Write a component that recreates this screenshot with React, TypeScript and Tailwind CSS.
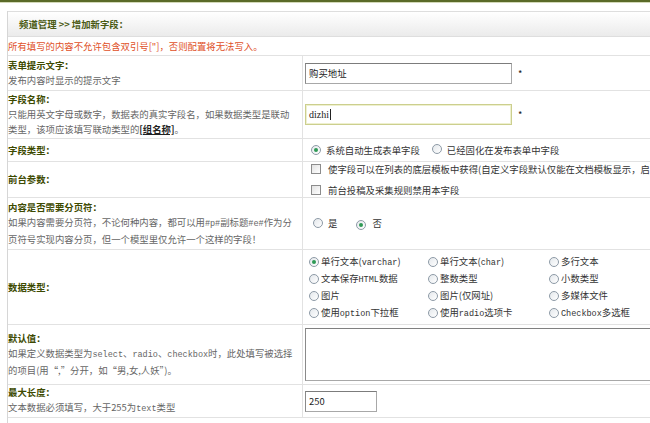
import React from 'react';

const labelCls = 'font-bold text-[#3d4a00]';
const descCls = 'text-[#666666]';

// latin words in the old SimSun pages are narrow and mono
const M: React.FC<{ children: React.ReactNode }> = ({ children }) => (
  <span className="font-['Liberation_Mono',monospace] text-[8.5px]">{children}</span>
);

const Radio: React.FC<{ checked?: boolean }> = ({ checked }) => (
  <span className="inline-flex w-[10px] h-[10px] shrink-0 items-center justify-center rounded-full border border-[#8d9aa6] bg-gradient-to-br from-[#e4e8ec] to-white">
    {checked && <span className="w-[4px] h-[4px] rounded-full bg-[#2f9a55]" />}
  </span>
);

const Checkbox: React.FC = () => (
  <span className="inline-block w-[10px] h-[10px] shrink-0 border border-[#8c8c8c] bg-gradient-to-br from-[#e2e2e2] to-white" />
);

const Row: React.FC<{ h: string; left: React.ReactNode; children?: React.ReactNode }> = ({ h, left, children }) => (
  <div className={`flex border-b border-[#e2e2e2] ${h}`}>
    <div className="w-[295px] shrink-0 border-r border-[#e2e2e2] flex flex-col justify-center leading-[15px] whitespace-nowrap">
      {left}
    </div>
    <div className="flex-1 flex items-center pl-[2px] min-w-0">{children}</div>
  </div>
);

const dataTypes: React.ReactNode[][] = [
  [<>单行文本(<M>varchar</M>)</>, <>单行文本(<M>char</M>)</>, <>多行文本</>],
  [<>文本保存<M>HTML</M>数据</>, <>整数类型</>, <>小数类型</>],
  [<>图片</>, <>图片(仅网址)</>, <>多媒体文件</>],
  [<>使用<M>option</M>下拉框</>, <>使用<M>radio</M>选项卡</>, <><M>Checkbox</M>多选框</>],
];

export default function App() {
  return (
    <div className="w-[650px] h-[423px] overflow-hidden bg-white text-[9.4px] text-[#333] font-['Noto_Sans_CJK_SC',sans-serif]">
      <div className="h-[2px] bg-[#5a6a28]" />
      <div className="h-px bg-[#d3d9b8]" />
      <div className="ml-[7px] mt-[8px] border-l border-[#d6d6d6] h-[420px]">
        {/* header */}
        <div className="h-[26px] border-t border-b border-[#dedede] bg-gradient-to-b from-white to-[#ebebeb] flex items-center pl-[11px]">
          <span className="font-bold text-[#4a5a14]">频道管理 &gt;&gt; 增加新字段：</span>
        </div>

        <div className="h-[19px] flex items-center border-b border-[#e2e2e2] text-[#e0501f]">
          所有填写的内容不允许包含双引号["]，否则配置将无法写入。
        </div>

        <Row
          h="h-[35px]"
          left={
            <>
              <span className={labelCls}>表单提示文字：</span>
              <span className={descCls}>发布内容时显示的提示文字</span>
            </>
          }
        >
          <div className="w-[207px] h-[21px] border border-[#a8a8a8] border-t-[#7c7c7c] border-l-[#8a8a8a] flex items-center pl-[3px] text-[#222]">
            购买地址
          </div>
          <span className="ml-[6px] text-[#222]">*</span>
        </Row>

        <Row
          h="h-[48px]"
          left={
            <>
              <span className={labelCls}>字段名称：</span>
              <span className={descCls}>
                只能用英文字母或数字，数据表的真实字段名，如果数据类型是联动
                <br />
                类型，该项应该填写联动类型的<span className="font-bold text-[#222] underline">[组名称]</span>。
              </span>
            </>
          }
        >
          <div className="w-[207px] h-[21px] border border-[#cccf8e] bg-white flex items-center pl-[3px] text-[#222] shadow-[inset_0_0_0_1px_#eef0cf]">
            <span className="font-['Liberation_Serif',serif] text-[10px]">dizhi</span>
            <span className="ml-px w-px h-[11px] bg-[#222]" />
          </div>
          <span className="ml-[6px] text-[#222]">*</span>
        </Row>

        <Row h="h-[23px]" left={<span className={labelCls}>字段类型：</span>}>
          <div className="flex items-center pl-[6px] text-[#333]">
            <Radio checked />
            <span className="ml-[5px]">系统自动生成表单字段</span>
            <span className="ml-[12px]"><Radio /></span>
            <span className="ml-[5px]">已经固化在发布表单中字段</span>
          </div>
        </Row>

        <Row h="h-[36px]" left={<span className={labelCls}>前台参数：</span>}>
          <div className="flex flex-col gap-[7px] pl-[6px] whitespace-nowrap">
            <div className="flex items-center">
              <Checkbox />
              <span className="ml-[7px]">使字段可以在列表的底层模板中获得(自定义字段默认仅能在文档模板显示，启</span>
            </div>
            <div className="flex items-center">
              <Checkbox />
              <span className="ml-[7px]">前台投稿及采集规则禁用本字段</span>
            </div>
          </div>
        </Row>

        <Row
          h="h-[52px]"
          left={
            <>
              <span className={labelCls}>内容是否需要分页符：</span>
              <span className={descCls}>
                如果内容需要分页符，不论何种内容，都可以用<M>#p#</M>副标题<M>#e#</M>作为分
                <br />
                页符号实现内容分页，但一个模型里仅允许一个这样的字段！
              </span>
            </>
          }
        >
          <div className="flex items-center pl-[8px]">
            <Radio />
            <span className="ml-[5px]">是</span>
            <span className="ml-[19px]"><Radio checked /></span>
            <span className="ml-[6px]">否</span>
          </div>
        </Row>

        <Row h="h-[75px]" left={<span className={labelCls}>数据类型：</span>}>
          <div className="grid grid-cols-[119px_121px_120px] gap-y-[7px] pl-[4px] whitespace-nowrap">
            {dataTypes.flat().map((t, i) => (
              <div key={i} className="flex items-center h-[10px]">
                <Radio checked={i === 0} />
                <span className="ml-[2px]">{t}</span>
              </div>
            ))}
          </div>
        </Row>

        <Row
          h="h-[60px]"
          left={
            <>
              <span className={labelCls}>默认值：</span>
              <span className={descCls}>
                如果定义数据类型为<M>select</M>、<M>radio</M>、<M>checkbox</M>时，此处填写被选择
                <br />
                的项目(用“,”分开，如“男,女,人妖”)。
              </span>
            </>
          }
        >
          <div className="w-[400px] h-[53px] shrink-0 border border-[#a8a8a8] border-t-[#808080] border-l-[#8a8a8a]" />
        </Row>

        <Row
          h="h-[33px]"
          left={
            <>
              <span className={labelCls}>最大长度：</span>
              <span className={descCls}>
                文本数据必须填写，大于255为<M>text</M>类型
              </span>
            </>
          }
        >
          <div className="w-[72px] h-[21px] border border-[#a8a8a8] border-t-[#7c7c7c] border-l-[#8a8a8a] flex items-center pl-[3px] text-[#222]">
            250
          </div>
        </Row>
      </div>
    </div>
  );
}
